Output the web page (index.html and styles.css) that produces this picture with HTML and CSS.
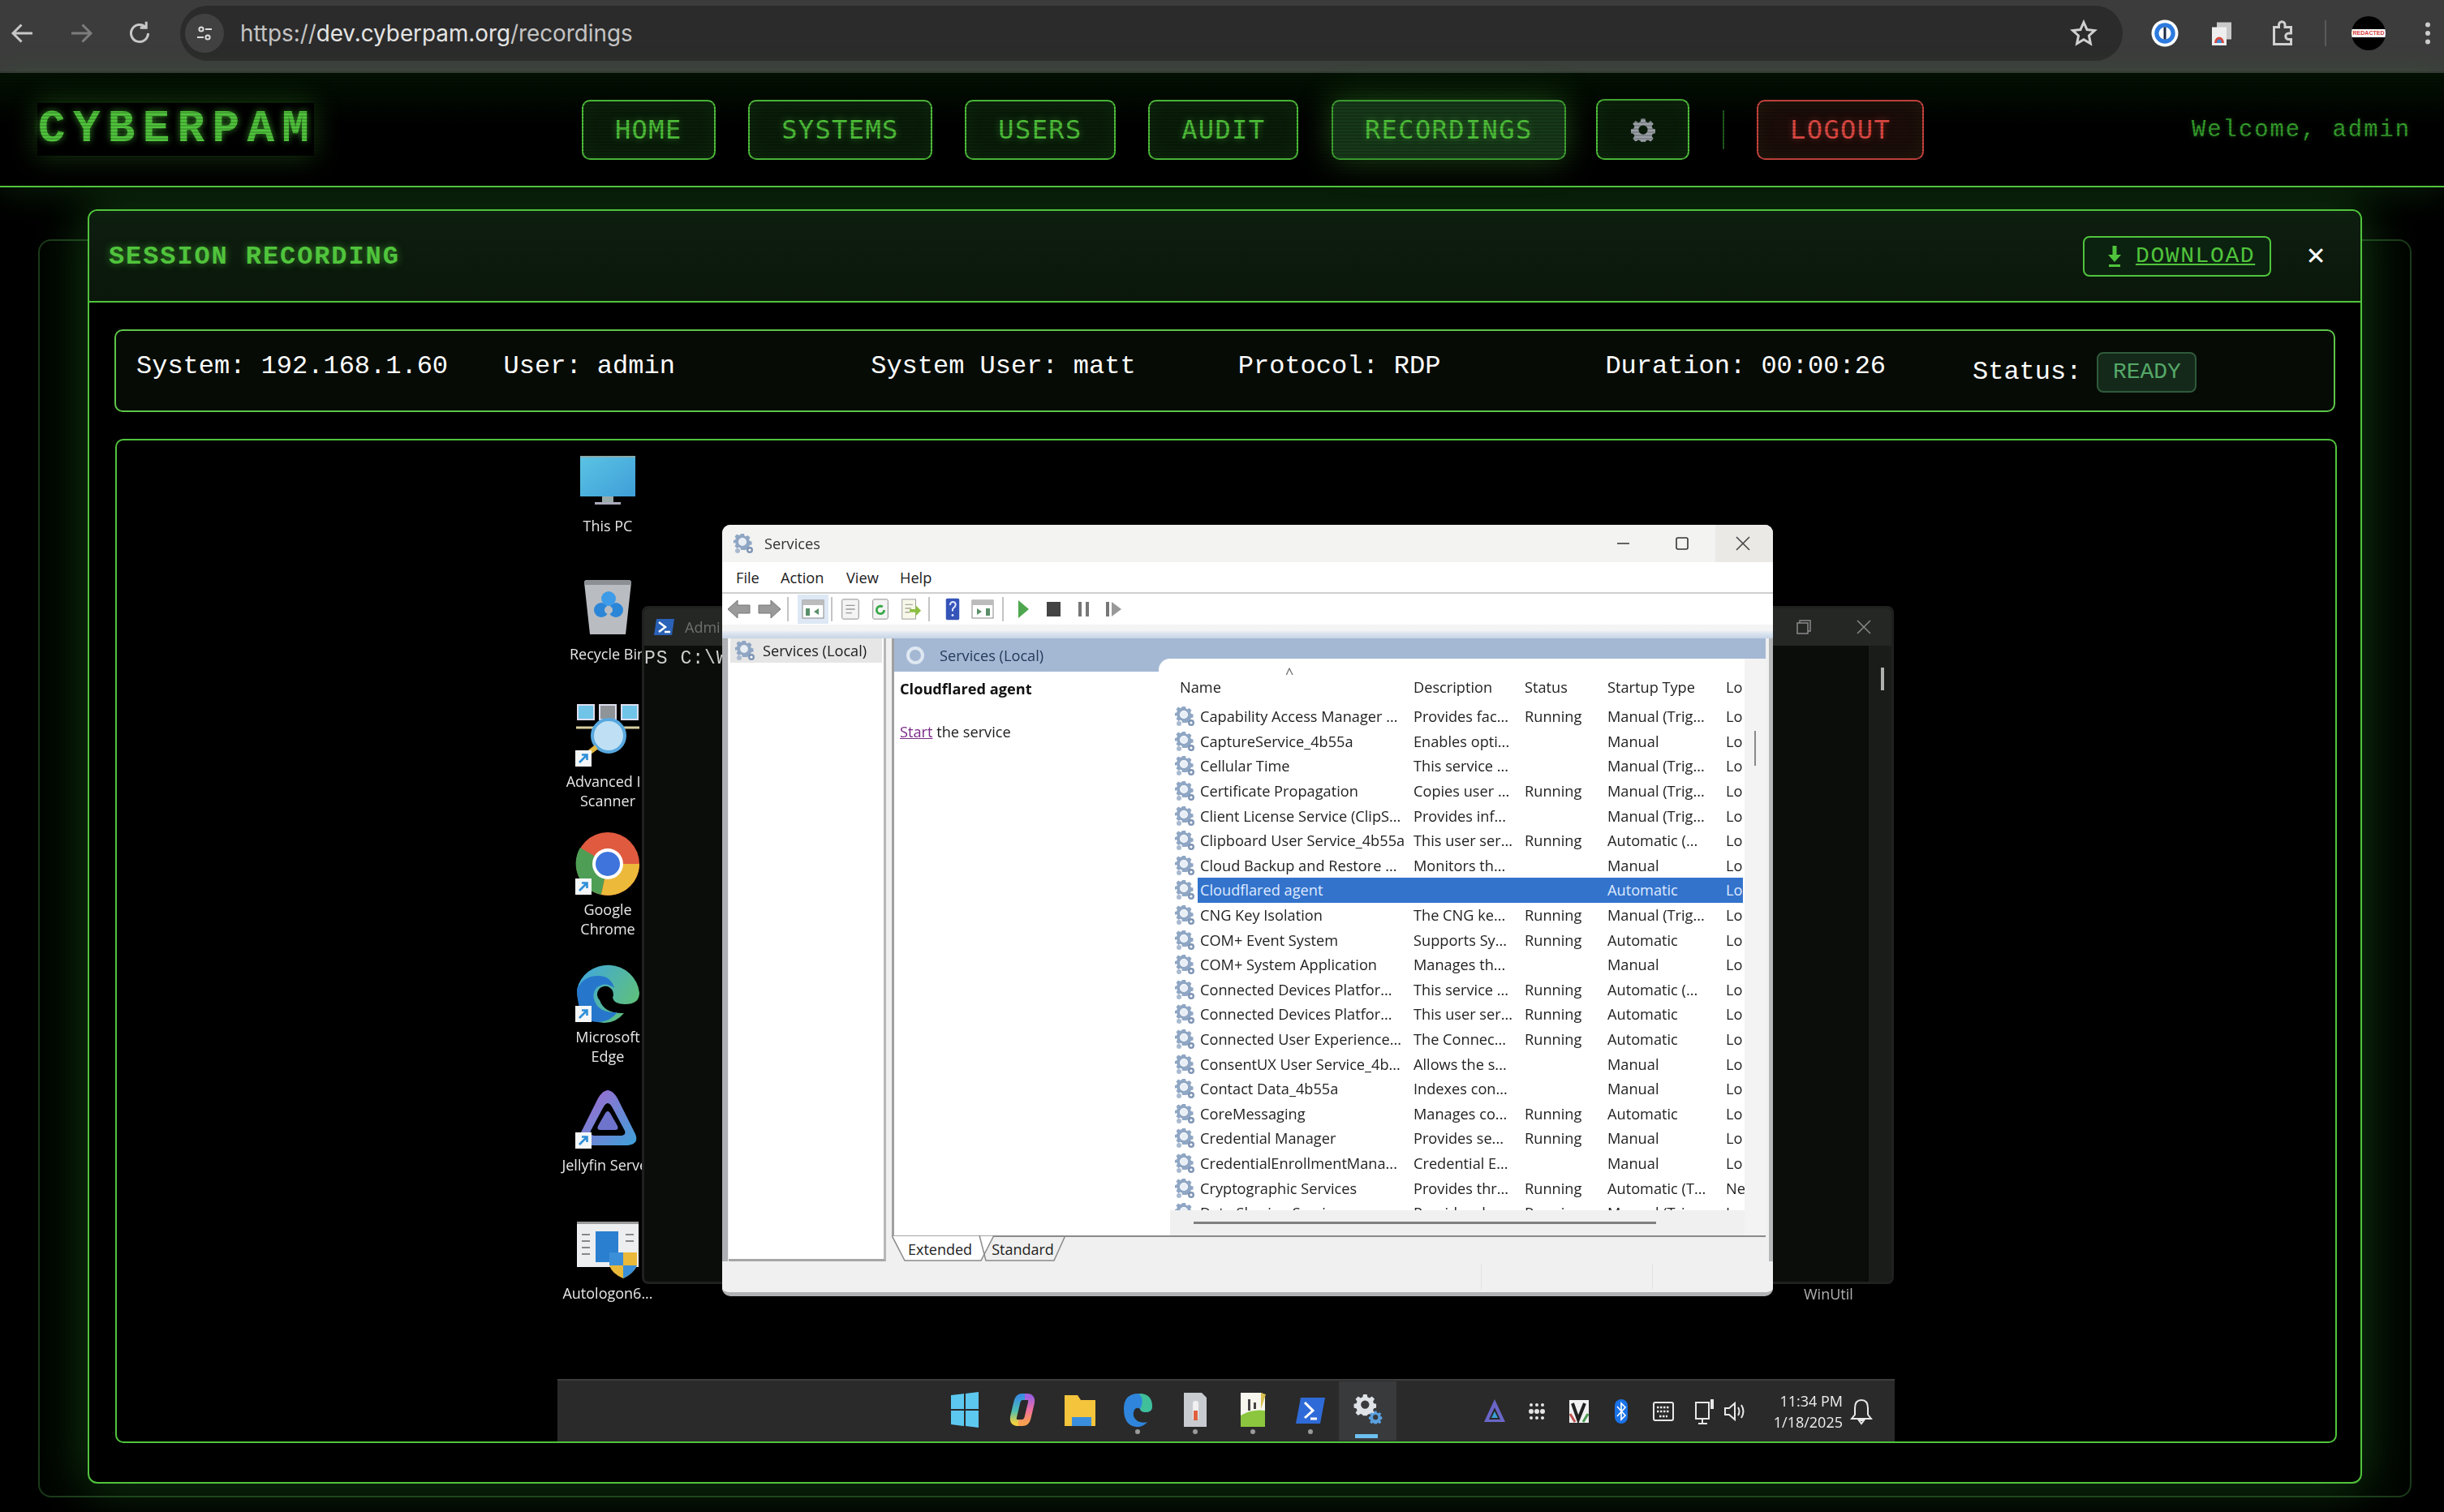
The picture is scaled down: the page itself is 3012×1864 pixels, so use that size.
FILE: index.html
```html
<!DOCTYPE html>
<html lang="en">
<head>
  <meta charset="UTF-8" />
  <title>CyberPAM - Recordings</title>
  <link rel="stylesheet" href="styles.css">
</head>
<body>
  <svg class="defs" width="0" height="0">
    <defs>
      <symbol id="gear" viewBox="0 0 24 24">
        <path fill-rule="evenodd" d="M10 1h4l.6 3 2.2.9 2.6-1.700 2.800 2.800-1.700 2.600.9 2.200 3 .6v4l-3 .6-.9 2.200 1.700 2.600-2.800 2.800-2.600-1.700-2.200.9-.6 3h-4l-.6-3-2.200-.9-2.600 1.700-2.800-2.800 1.700-2.600-.9-2.200-3-.6v-4l3-.6.9-2.200L1.800 6l2.800-2.800 2.600 1.700 2.200-.9zM12 7.500a4.500 4.500 0 1 0 0 9 4.500 4.500 0 0 0 0-9z"/>
      </symbol>
      <symbol id="svc" viewBox="0 0 26 26">
        <path fill="#8fa6c4" fill-rule="evenodd" d="M9 1h4l.5 2.500 2 .8 2.200-1.400 2.800 2.800-1.400 2.200.8 2 2.600.5v4l-2.600.5-.8 2 1.400 2.200-2.800 2.800-2.200-1.400-2 .8L13 21H9l-.5-2.500-2-.8-2.200 1.400-2.800-2.800 1.400-2.200-.8-2L-.5 13V9l2.600-.5.8-2-1.400-2.200 2.800-2.800 2.200 1.400 2-.8zM11 6a5 5 0 1 0 0 10 5 5 0 0 0 0-10z"/>
        <circle cx="11" cy="11" r="4" fill="#e8eef6"/>
        <circle cx="20" cy="21" r="4" fill="#7f95b5"/>
        <circle cx="20" cy="21" r="1.600" fill="#fff"/>
        <circle cx="5" cy="22" r="3" fill="#a9bad0"/>
      </symbol>
      <symbol id="shortcut" viewBox="0 0 20 20">
        <rect width="20" height="20" fill="#f4f6f8"/>
        <path d="M5 15 14 6M8 5.500h6.500V12" fill="none" stroke="#2f8fd8" stroke-width="2.600"/>
      </symbol>
    </defs>
  </svg>

  <div class="browser-bar">
    <div class="browser-nav">
      <svg class="chrome-ico" viewBox="0 0 24 24"><path d="M20 12H5M11 5l-7 7 7 7" fill="none" stroke="#c7c7c7" stroke-width="2"/></svg>
      <svg class="chrome-ico" viewBox="0 0 24 24"><path d="M4 12h15M13 5l7 7-7 7" fill="none" stroke="#7c7c7c" stroke-width="2"/></svg>
      <svg class="chrome-ico" viewBox="0 0 24 24"><path d="M19 12a7 7 0 1 1-2.100-5M17.500 2.500v5h-5" fill="none" stroke="#c7c7c7" stroke-width="2"/></svg>
    </div>
    <div class="omnibox">
      <span class="site-info">
        <svg viewBox="0 0 24 24" width="24" height="24"><circle cx="8" cy="7" r="2.600" fill="none" stroke="#ddd" stroke-width="2"/><path d="M13 7h8M3 17h8" stroke="#ddd" stroke-width="2"/><circle cx="16" cy="17" r="2.600" fill="none" stroke="#ddd" stroke-width="2"/></svg>
      </span>
      <span class="url"><span class="url-dim">https://</span>dev.cyberpam.org<span class="url-dim">/recordings</span></span>
      <svg class="star" viewBox="0 0 24 24"><path d="M12 3l2.700 6 6.300.7-4.700 4.300 1.300 6.500-5.600-3.300-5.600 3.300 1.300-6.500L3 9.700 9.300 9z" fill="none" stroke="#d0d0d0" stroke-width="2"/></svg>
    </div>
    <div class="browser-tools">
      <svg class="chrome-ico" viewBox="0 0 24 24"><circle cx="12" cy="12" r="11" fill="#fff"/><circle cx="12" cy="12" r="8.500" fill="#2d7be0"/><circle cx="12" cy="12" r="5" fill="#fff"/><rect x="11" y="7" width="2" height="10" fill="#1a2a44"/></svg>
      <svg class="chrome-ico" viewBox="0 0 24 24"><rect x="8" y="3" width="12" height="14" fill="#c9c9c9"/><rect x="4" y="7" width="12" height="15" fill="#eee"/><path d="M6 20a4 5 0 0 1 8 0z" fill="#d8483c"/><path d="M8 20a2 3 0 0 1 4 0z" fill="#3a8fdc"/></svg>
      <svg class="chrome-ico puzzle" viewBox="0 0 24 24"><path d="M5 7h4V5a2.500 2.500 0 0 1 5 0v2h5v5h-2a2.500 2.500 0 0 0 0 5h2v4H5z" fill="none" stroke="#d0d0d0" stroke-width="2"/></svg>
      <span class="tools-sep"></span>
      <span class="avatar"><span class="avatar-strip">REDACTED</span></span>
      <svg class="chrome-ico" viewBox="0 0 24 24"><circle cx="12" cy="5" r="2" fill="#ccc"/><circle cx="12" cy="12" r="2" fill="#ccc"/><circle cx="12" cy="19" r="2" fill="#ccc"/></svg>
    </div>
  </div>

  <header class="app-header">
    <div class="logo">CYBERPAM</div>
    <nav class="main-nav">
      <a class="nav-btn">HOME</a>
      <a class="nav-btn">SYSTEMS</a>
      <a class="nav-btn">USERS</a>
      <a class="nav-btn">AUDIT</a>
      <a class="nav-btn active">RECORDINGS</a>
      <a class="nav-btn gear-btn">
        <svg class="gear-ico" viewBox="0 0 24 24"><use href="#gear"/></svg>
      </a>
      <span class="nav-sep"></span>
      <a class="nav-btn logout">LOGOUT</a>
    </nav>
    <div class="welcome">Welcome, admin</div>
  </header>

  <main class="page">
    <div class="back-card"></div>

    <section class="modal">
      <div class="modal-head">
        <h2 class="modal-title">SESSION RECORDING</h2>
        <a class="download-btn">
          <svg viewBox="0 0 20 28" width="20" height="28"><path d="M7.500 1h5v11h5.500L10 21 2 12h5.500zM3 24h14v3H3z" fill="#50c43c"/></svg>
          <span>DOWNLOAD</span>
        </a>
        <span class="modal-close">✕</span>
      </div>

      <div class="modal-body">
        <div class="info-row">
          <span>System: 192.168.1.60</span>
          <span>User: admin</span>
          <span>System User: matt</span>
          <span>Protocol: RDP</span>
          <span>Duration: 00:00:26</span>
          <span class="status-cell">Status: <b class="ready">READY</b></span>
        </div>

        <div class="player">
          <div class="desktop">
            <div class="desk-icons">
              <div class="tile">
                <svg class="tile-ico" viewBox="0 0 80 80"><defs><linearGradient id="scr" x1="0" y1="0" x2="1" y2="1"><stop offset="0" stop-color="#5cc4e4"/><stop offset="1" stop-color="#3e9ed8"/></linearGradient></defs><rect x="6" y="10" width="68" height="50" fill="url(#scr)"/><rect x="6" y="10" width="68" height="2" fill="#8aa"/><rect x="33" y="60" width="14" height="7" fill="#9aa"/><rect x="24" y="67" width="32" height="3" fill="#aab"/></svg>
                <div class="tile-label">This PC</div>
              </div>
              <div class="tile">
                <svg class="tile-ico" viewBox="0 0 80 80"><path d="M11 8q0-3 4-3h50q4 0 4 3l-7 64H18z" fill="#b9bdc2"/><path d="M11 8q0-3 4-3h50q4 0 4 3v3H11z" fill="#8c9095"/><circle cx="32" cy="42" r="9" fill="#2c86d8"/><circle cx="50" cy="42" r="9" fill="#2c86d8"/><circle cx="41" cy="28" r="9" fill="#3d9be8"/><circle cx="41" cy="42" r="5" fill="#b9bdc2"/></svg>
                <div class="tile-label">Recycle Bin</div>
              </div>
              <div class="tile">
                <svg class="tile-ico" viewBox="0 0 80 80"><g fill="#6fc4e8" stroke="#dde" stroke-width="2"><rect x="3" y="2" width="20" height="18"/><rect x="57" y="2" width="20" height="18"/></g><rect x="30" y="2" width="20" height="18" fill="#8e9498" stroke="#dde" stroke-width="2"/><path d="M1 30h78" stroke="#d8cfa0" stroke-width="3"/><circle cx="41" cy="40" r="20" fill="#bfe0f4"/><circle cx="41" cy="40" r="20" fill="none" stroke="#58a8e0" stroke-width="4"/><path d="M26 54l-8 6" stroke="#e0b640" stroke-width="6"/><use href="#shortcut" x="0" y="58" width="20" height="20"/></svg>
                <div class="tile-label">Advanced IP<br>Scanner</div>
              </div>
              <div class="tile">
                <svg class="tile-ico" viewBox="0 0 80 80">
                  <circle cx="40" cy="40" r="39" fill="#e05a3f"/>
                  <path d="M40 40L6 20A39 39 0 0 0 32 78z" fill="#4f9e55"/>
                  <path d="M40 40h39A39 39 0 0 1 32 78z" fill="#ecb93a"/>
                  <circle cx="40" cy="40" r="19" fill="#fff"/>
                  <circle cx="40" cy="40" r="15" fill="#3f74dc"/>
                  <use href="#shortcut" x="0" y="58" width="20" height="20"/>
                </svg>
                <div class="tile-label">Google<br>Chrome</div>
              </div>
              <div class="tile">
                <svg class="tile-ico" viewBox="0 0 80 80">
                  <defs><linearGradient id="edge" x1="0" y1="0" x2="1" y2="0.6"><stop offset="0" stop-color="#3fa6e4"/><stop offset="1" stop-color="#5fc07a"/></linearGradient></defs>
                  <path d="M2 38a39 38 0 0 1 77 4q0 14-18 14-13 0-15-8a10 10 0 1 0-16 3q6 17 30 16-10 12-24 12Q3 78 2 38z" fill="url(#edge)"/>
                  <path d="M2 38q8-18 28-17 14 1 18 15-12-9-22 0-8 10 2 23 8 8 24 7-10 12-24 12Q3 78 2 38z" fill="#2677cc"/>
                  <use href="#shortcut" x="0" y="58" width="20" height="20"/>
                </svg>
                <div class="tile-label">Microsoft<br>Edge</div>
              </div>
              <div class="tile">
                <svg class="tile-ico" viewBox="0 0 80 80">
                  <defs><linearGradient id="jelly" x1="0" y1="0" x2="1" y2="1"><stop offset="0" stop-color="#a866d0"/><stop offset="1" stop-color="#3da0d8"/></linearGradient></defs>
                  <path fill="url(#jelly)" fill-rule="evenodd" d="M40 4q6 0 12 10l22 44q5 12-9 14H15Q1 70 6 58l22-44Q34 4 40 4zm0 16q-3 0-6 6L19 54q-2 5 4 6h34q6-1 4-6L46 26q-3-6-6-6z"/>
                  <path d="M40 30q2 0 4 4l8 14q2 5-3 5H31q-5 0-3-5l8-14q2-4 4-4z" fill="#6e74cc"/>
                  <use href="#shortcut" x="0" y="56" width="20" height="20"/>
                </svg>
                <div class="tile-label">Jellyfin Server</div>
              </div>
              <div class="tile">
                <svg class="tile-ico" viewBox="0 0 80 80">
                  <rect x="2" y="8" width="76" height="56" fill="#eceef0"/>
                  <rect x="2" y="8" width="76" height="3" fill="#9a9a9a"/>
                  <path d="M8 24h10M8 32h10M8 40h10M8 48h10M62 24h10M62 32h10" stroke="#888" stroke-width="2"/>
                  <rect x="25" y="20" width="28" height="38" fill="#2a7fd0"/>
                  <path d="M42 46h34v16q-4 10-17 16-14-6-17-16z" fill="#eab93a"/>
                  <path d="M42 46h17v16H42zM59 62h17q-4 10-17 16z" fill="#3a8fd8"/>
                </svg>
                <div class="tile-label">Autologon6...</div>
              </div>
            </div>

            <div class="terminal">
              <div class="term-bar">
                <svg viewBox="0 0 26 22" width="26" height="22"><path d="M3 1h22l-3 20H0z" fill="#2a62b8"/><path d="M6 5l8 6-8 6" fill="none" stroke="#fff" stroke-width="2.500"/><path d="M13 17h7" stroke="#fff" stroke-width="2.500"/></svg>
                <span class="term-title">Admi</span>
                <span class="term-ctrls">
                  <svg viewBox="0 0 20 20" width="20" height="20"><path d="M2 5h13v13H2zM5 5V2h13v13h-3" fill="none" stroke="#8a8a8a" stroke-width="1.500"/></svg>
                  <svg viewBox="0 0 20 20" width="20" height="20"><path d="M2 2l16 16M18 2L2 18" fill="none" stroke="#8a8a8a" stroke-width="1.500"/></svg>
                </span>
              </div>
              <div class="term-main">
                <div class="term-text">PS C:\WI</div>
                <div class="term-scroll"><span class="term-thumb"></span></div>
              </div>
            </div>

            <div class="desk-label">WinUtil</div>

            <div class="services">
              <div class="svc-title">
                <svg class="svc-ico" viewBox="0 0 26 26"><use href="#svc"/></svg>
                <span>Services</span>
                <span class="win-ctrls">
                  <span class="win-ctrl"><svg viewBox="0 0 20 20" width="20" height="20"><path d="M2 10h15" stroke="#333" stroke-width="1.600"/></svg></span>
                  <span class="win-ctrl"><svg viewBox="0 0 20 20" width="20" height="20"><rect x="3" y="3" width="14" height="14" rx="2" fill="none" stroke="#333" stroke-width="1.600"/></svg></span>
                  <span class="win-ctrl close"><svg viewBox="0 0 20 20" width="20" height="20"><path d="M2 2l16 16M18 2L2 18" stroke="#444" stroke-width="1.600"/></svg></span>
                </span>
              </div>
              <div class="svc-menu">
                <span>File</span><span>Action</span><span>View</span><span>Help</span>
              </div>
              <div class="svc-tools">
                <svg class="tb" viewBox="0 0 30 26"><path d="M1 13L13 2v6h15v10H13v6z" fill="#9a9a9a" stroke="#777"/></svg>
                <svg class="tb" viewBox="0 0 30 26"><path d="M29 13L17 2v6H2v10h15v6z" fill="#9a9a9a" stroke="#777"/></svg>
                <span class="tb-sep"></span>
                <span class="tb-on"><svg class="tb" viewBox="0 0 30 26"><rect x="2" y="2" width="26" height="22" fill="#fff" stroke="#888"/><rect x="2" y="2" width="26" height="6" fill="#bcbcbc"/><path d="M6 12h5v9H6zM22 12l-6 4 6 4z" fill="#5a8f6a"/></svg></span>
                <span class="tb-sep"></span>
                <svg class="tb" viewBox="0 0 30 30"><rect x="4" y="2" width="22" height="26" rx="2" fill="#f4f4f4" stroke="#888"/><path d="M9 10h12M9 15h12M9 20h8" stroke="#999" stroke-width="1.500"/></svg>
                <svg class="tb" viewBox="0 0 30 30"><rect x="5" y="2" width="20" height="26" rx="2" fill="#f4f4f4" stroke="#888"/><path d="M20 16a5 5 0 1 1-2-4" fill="none" stroke="#3aa84a" stroke-width="3"/></svg>
                <svg class="tb" viewBox="0 0 30 30"><rect x="4" y="2" width="18" height="26" fill="#f7f7ea" stroke="#999"/><path d="M8 9h10M8 14h8M8 19h6" stroke="#aa9" stroke-width="1.500"/><path d="M14 15h8v-5l7 7-7 7v-5h-8z" fill="#8cc040"/></svg>
                <span class="tb-sep wide"></span>
                <svg class="tb" viewBox="0 0 30 34"><rect x="5" y="1" width="20" height="32" rx="2" fill="#3554b8"/><path d="M11 11q1-5 4.500-5t4 4q0 3-3 5l-1.500 2v3" fill="none" stroke="#dfe6ff" stroke-width="2.500"/><circle cx="15" cy="26" r="1.800" fill="#dfe6ff"/></svg>
                <svg class="tb" viewBox="0 0 30 26"><rect x="2" y="2" width="26" height="22" fill="#fff" stroke="#888"/><rect x="2" y="2" width="26" height="6" fill="#bcbcbc"/><path d="M19 12h5v9h-5zM8 12l6 4-6 4z" fill="#5a8f6a"/></svg>
                <span class="tb-sep mid"></span>
                <svg class="tb" viewBox="0 0 30 26"><path d="M9 2l13 11L9 24z" fill="#4ea64e"/></svg>
                <svg class="tb" viewBox="0 0 30 26"><rect x="7" y="4" width="17" height="18" fill="#444"/></svg>
                <svg class="tb" viewBox="0 0 30 26"><path d="M9 4h4v18H9zM18 4h4v18h-4z" fill="#777"/></svg>
                <svg class="tb" viewBox="0 0 30 26"><path d="M6 4h4v18H6z" fill="#777"/><path d="M13 4l12 9-12 9z" fill="#999"/></svg>
              </div>
              <div class="svc-band"></div>
              <div class="svc-body">
                <div class="tree-pane">
                  <div class="tree-node">
                    <svg class="svc-ico" viewBox="0 0 26 26"><use href="#svc"/></svg>
                    <span>Services (Local)</span>
                  </div>
                </div>
                <div class="detail-pane">
                  <div class="detail-main">
                    <div class="detail-side">
                      <div class="detail-head">
                        <svg class="head-ico" viewBox="0 0 24 24"><circle cx="12" cy="12" r="9" fill="none" stroke="#dfe8f2" stroke-width="4"/></svg>
                        <span>Services (Local)</span>
                      </div>
                      <div class="detail-name">Cloudflared agent</div>
                      <div class="detail-link"><u>Start</u> the service</div>
                    </div>
                    <div class="list-side">
                      <div class="list-wrap">
                        <div class="svc-row list-head">
                          <i></i><span>Name<em class="sort-caret">^</em></span><span>Description</span><span>Status</span><span>Startup Type</span><span>Lo</span>
                        </div>
                        <div class="rows">
                          <div class="svc-row"><svg viewBox="0 0 26 26"><use href="#svc"/></svg><span>Capability Access Manager ...</span><span>Provides fac...</span><span>Running</span><span>Manual (Trig...</span><span>Lo</span></div>
                          <div class="svc-row"><svg viewBox="0 0 26 26"><use href="#svc"/></svg><span>CaptureService_4b55a</span><span>Enables opti...</span><span></span><span>Manual</span><span>Lo</span></div>
                          <div class="svc-row"><svg viewBox="0 0 26 26"><use href="#svc"/></svg><span>Cellular Time</span><span>This service ...</span><span></span><span>Manual (Trig...</span><span>Lo</span></div>
                          <div class="svc-row"><svg viewBox="0 0 26 26"><use href="#svc"/></svg><span>Certificate Propagation</span><span>Copies user ...</span><span>Running</span><span>Manual (Trig...</span><span>Lo</span></div>
                          <div class="svc-row"><svg viewBox="0 0 26 26"><use href="#svc"/></svg><span>Client License Service (ClipS...</span><span>Provides inf...</span><span></span><span>Manual (Trig...</span><span>Lo</span></div>
                          <div class="svc-row"><svg viewBox="0 0 26 26"><use href="#svc"/></svg><span>Clipboard User Service_4b55a</span><span>This user ser...</span><span>Running</span><span>Automatic (...</span><span>Lo</span></div>
                          <div class="svc-row"><svg viewBox="0 0 26 26"><use href="#svc"/></svg><span>Cloud Backup and Restore ...</span><span>Monitors th...</span><span></span><span>Manual</span><span>Lo</span></div>
                          <div class="svc-row selected"><svg viewBox="0 0 26 26"><use href="#svc"/></svg><span>Cloudflared agent</span><span></span><span></span><span>Automatic</span><span>Lo</span></div>
                          <div class="svc-row"><svg viewBox="0 0 26 26"><use href="#svc"/></svg><span>CNG Key Isolation</span><span>The CNG ke...</span><span>Running</span><span>Manual (Trig...</span><span>Lo</span></div>
                          <div class="svc-row"><svg viewBox="0 0 26 26"><use href="#svc"/></svg><span>COM+ Event System</span><span>Supports Sy...</span><span>Running</span><span>Automatic</span><span>Lo</span></div>
                          <div class="svc-row"><svg viewBox="0 0 26 26"><use href="#svc"/></svg><span>COM+ System Application</span><span>Manages th...</span><span></span><span>Manual</span><span>Lo</span></div>
                          <div class="svc-row"><svg viewBox="0 0 26 26"><use href="#svc"/></svg><span>Connected Devices Platfor...</span><span>This service ...</span><span>Running</span><span>Automatic (...</span><span>Lo</span></div>
                          <div class="svc-row"><svg viewBox="0 0 26 26"><use href="#svc"/></svg><span>Connected Devices Platfor...</span><span>This user ser...</span><span>Running</span><span>Automatic</span><span>Lo</span></div>
                          <div class="svc-row"><svg viewBox="0 0 26 26"><use href="#svc"/></svg><span>Connected User Experience...</span><span>The Connec...</span><span>Running</span><span>Automatic</span><span>Lo</span></div>
                          <div class="svc-row"><svg viewBox="0 0 26 26"><use href="#svc"/></svg><span>ConsentUX User Service_4b...</span><span>Allows the s...</span><span></span><span>Manual</span><span>Lo</span></div>
                          <div class="svc-row"><svg viewBox="0 0 26 26"><use href="#svc"/></svg><span>Contact Data_4b55a</span><span>Indexes con...</span><span></span><span>Manual</span><span>Lo</span></div>
                          <div class="svc-row"><svg viewBox="0 0 26 26"><use href="#svc"/></svg><span>CoreMessaging</span><span>Manages co...</span><span>Running</span><span>Automatic</span><span>Lo</span></div>
                          <div class="svc-row"><svg viewBox="0 0 26 26"><use href="#svc"/></svg><span>Credential Manager</span><span>Provides se...</span><span>Running</span><span>Manual</span><span>Lo</span></div>
                          <div class="svc-row"><svg viewBox="0 0 26 26"><use href="#svc"/></svg><span>CredentialEnrollmentMana...</span><span>Credential E...</span><span></span><span>Manual</span><span>Lo</span></div>
                          <div class="svc-row"><svg viewBox="0 0 26 26"><use href="#svc"/></svg><span>Cryptographic Services</span><span>Provides thr...</span><span>Running</span><span>Automatic (T...</span><span>Ne</span></div>
                          <div class="svc-row"><svg viewBox="0 0 26 26"><use href="#svc"/></svg><span>Data Sharing Service</span><span>Provides da...</span><span>Running</span><span>Manual (Trig...</span><span>Lo</span></div>
                        </div>
                        <div class="hscroll"><span class="hthumb"></span></div>
                      </div>
                      <div class="vscroll"><span class="vthumb"></span></div>
                    </div>
                  </div>
                  <div class="svc-tabs">
                    <svg class="tab-shape" viewBox="0 0 215 32" width="215" height="32">
                      <path d="M0 0l16 31h94l16-31z" fill="#fff" stroke="#8a8a8a" stroke-width="1.500"/>
                      <path d="M110 0l-2 0 8 31h84l14-31" fill="none" stroke="#8a8a8a" stroke-width="1.500"/>
                    </svg>
                    <span class="tab">Extended</span>
                    <span class="tab">Standard</span>
                  </div>
                </div>
              </div>
              <div class="svc-status">
                <span class="status-part"></span>
                <span class="status-part"></span>
              </div>
            </div>

            <div class="taskbar">
              <div class="task-apps">
                <span class="task-app">
                  <svg viewBox="0 0 40 46"><path d="M3 5l16-2v19H3zM21 3l16-2v21H21zM3 24h16v19L3 41zM21 24h16v21l-16-2z" fill="#5cc8f0"/></svg>
                </span>
                <span class="task-app">
                  <svg viewBox="0 0 40 46">
                    <defs>
                      <linearGradient id="cop1" x1="0" y1="0" x2="0" y2="1"><stop offset="0" stop-color="#3a8fe0"/><stop offset=".55" stop-color="#4fc0b0"/><stop offset="1" stop-color="#f0d040"/></linearGradient>
                      <linearGradient id="cop2" x1="0" y1="0" x2="0" y2="1"><stop offset="0" stop-color="#a060e0"/><stop offset=".5" stop-color="#f070a0"/><stop offset="1" stop-color="#f8a050"/></linearGradient>
                    </defs>
                    <path d="M25 7h-5q-5 0-6.500 6L9 32q-1 7 5 7h3" fill="none" stroke="url(#cop1)" stroke-width="8"/>
                    <path d="M15 39h5q5 0 6.500-6L31 14q1-7-5-7h-3" fill="none" stroke="url(#cop2)" stroke-width="8"/>
                  </svg>
                </span>
                <span class="task-app">
                  <svg viewBox="0 0 40 46"><path d="M1 5h16l4 6h18v32H1z" fill="#f4c43c"/><rect x="10" y="32" width="24" height="11" fill="#3a8fdc"/></svg>
                </span>
                <span class="task-app running">
                  <svg viewBox="0 0 40 46"><path d="M3 22Q3 3 21 3q16 0 17 16 0 7-8 7-6 0-7-4-4-3-7 1-4 8 4 14 6 3 12 1-6 7-14 6Q3 42 3 22z" fill="#2f85dc"/><path d="M22 3q16 0 16 16 0 7-8 7-6 0-7-4 6-10-1-19z" fill="#3fbf9a"/></svg>
                </span>
                <span class="task-app running">
                  <svg viewBox="0 0 40 46"><path d="M6 2h22l6 6v36H6z" fill="#c8ccd0"/><rect x="17" y="12" width="7" height="24" rx="3" fill="#f0f0f0"/><rect x="18" y="24" width="5" height="12" fill="#e06040"/></svg>
                </span>
                <span class="task-app running">
                  <svg viewBox="0 0 40 46"><path d="M5 2h26l4 6v36H5z" fill="#f6f6ee"/><path d="M5 30q14-8 30-6v20H5z" fill="#8cc63f"/><path d="M14 10h3v14h-3zM21 14h3v8h-3z" fill="#444"/><path d="M30 2l6 2-6 18z" fill="#d8c050"/></svg>
                </span>
                <span class="task-app running">
                  <svg viewBox="0 0 40 46"><path d="M8 8h30l-6 32H2z" fill="#2f6bd8"/><path d="M13 14l10 10-10 9" fill="none" stroke="#fff" stroke-width="3"/><path d="M20 34h8" stroke="#fff" stroke-width="3"/></svg>
                </span>
                <span class="task-app current">
                  <svg viewBox="0 0 40 50"><g fill="#dfe3e8"><use href="#gear" x="1" y="3" width="30" height="30"/></g><g fill="#5aa0e0"><use href="#gear" x="21" y="26" width="18" height="18"/></g></svg>
                </span>
              </div>
              <div class="task-tray">
                <svg viewBox="0 0 28 34" width="28" height="34"><path fill="#6a66c8" fill-rule="evenodd" d="M14 2l13 28H1zM14 12L7 27h14z"/><path d="M14 17l4 8h-8z" fill="#3a9ed8"/></svg>
                <svg viewBox="0 0 28 34" width="28" height="34"><g fill="#e4e4e4"><circle cx="7" cy="9" r="2"/><circle cx="14" cy="9" r="2"/><circle cx="21" cy="9" r="2"/><circle cx="7" cy="17" r="3"/><circle cx="14" cy="17" r="3"/><circle cx="21" cy="17" r="3"/><circle cx="7" cy="25" r="2"/><circle cx="14" cy="25" r="2"/><circle cx="21" cy="25" r="2"/></g></svg>
                <svg viewBox="0 0 28 34" width="28" height="34"><rect x="2" y="3" width="24" height="28" fill="#f2f2f2"/><path d="M6 7l7 20 8-20" fill="none" stroke="#222" stroke-width="4"/><path d="M3 20l6 10" stroke="#c05050" stroke-width="3"/><path d="M25 20l-6 10" stroke="#4a9a50" stroke-width="3"/></svg>
                <svg viewBox="0 0 28 34" width="28" height="34"><rect x="6" y="2" width="16" height="30" rx="8" fill="#1a72e8"/><path d="M9 11l10 11-5 5V7l5 5-10 11" fill="none" stroke="#fff" stroke-width="1.600"/></svg>
                <svg viewBox="0 0 28 34" width="28" height="34"><rect x="2" y="6" width="24" height="22" rx="2" fill="none" stroke="#e8e8e8" stroke-width="2"/><path d="M6 12h16M6 17h16M9 23h10" stroke="#e8e8e8" stroke-width="2.500" stroke-dasharray="2.500 1.500"/></svg>
                <svg viewBox="0 0 28 34" width="28" height="34"><path d="M2 6h16v20H2zM10 26v5M5 32h11" fill="none" stroke="#e8e8e8" stroke-width="2"/><path d="M22 2v12" stroke="#e8e8e8" stroke-width="4"/></svg>
                <svg class="tray-sound" viewBox="0 0 28 34" width="28" height="34"><path d="M2 13h5l7-6v20l-7-6H2z" fill="none" stroke="#e8e8e8" stroke-width="2"/><path d="M18 12q3 5 0 10M22 9q5 8 0 16" fill="none" stroke="#e8e8e8" stroke-width="2"/></svg>
                <div class="tray-clock"><div>11:34 PM</div><div>1/18/2025</div></div>
                <svg viewBox="0 0 28 34" width="28" height="34"><path d="M14 3q8 0 8 10v8l4 5H2l4-5v-8Q6 3 14 3zM11 28h6l-3 4z" fill="none" stroke="#e8e8e8" stroke-width="2"/></svg>
              </div>
            </div>
          </div>
        </div>
      </div>
    </section>
  </main>
</body>
</html>
```

FILE: styles.css
```css
* {
  box-sizing: border-box;
}

html, body {
  margin: 0;
  height: 100%;
}

body {
  width: 3012px;
  height: 1864px;
  overflow: hidden;
  display: flex;
  flex-direction: column;
  background: #000;
  font-family: 'Liberation Mono', monospace;
  color: #50c43c;
}

.defs {
  position: absolute;
}

/* browser chrome */
.browser-bar {
  height: 90px;
  flex: none;
  display: flex;
  align-items: center;
  background: #3c3c3c;
  border-bottom: 2px solid #333;
  padding-bottom: 6px;
}

.browser-nav {
  display: flex;
  gap: 36px;
  width: 222px;
  padding-left: 10px;
}

.chrome-ico {
  width: 36px;
  height: 36px;
  flex: none;
}

.omnibox {
  width: 2394px;
  height: 68px;
  display: flex;
  align-items: center;
  background: #2b2b2b;
  border-radius: 34px;
  padding-left: 6px;
}

.site-info {
  width: 48px;
  height: 48px;
  border-radius: 50%;
  background: #414141;
  display: flex;
  align-items: center;
  justify-content: center;
}

.url {
  font-family: Inter, sans-serif;
  font-size: 27.8px;
  margin-left: 20px;
  color: #e4e4e4;
  flex: 1;
}

.url-dim {
  color: #c4c4c4;
}

.star {
  width: 36px;
  height: 36px;
  margin-right: 30px;
}

.browser-tools {
  display: flex;
  align-items: center;
  gap: 34px;
  padding-left: 34px;
}

.puzzle {
  margin-left: 5px;
}

.tools-sep {
  width: 2px;
  height: 32px;
  background: #5a5a5a;
}

.avatar {
  width: 42px;
  height: 42px;
  margin-left: -3px;
  border-radius: 50%;
  background: #000;
  display: flex;
  align-items: center;
  overflow: hidden;
}

.avatar-strip {
  width: 100%;
  height: 10px;
  text-align: center;
  font: bold 7px/10px 'Liberation Sans', sans-serif;
  color: #d8403c;
  background: #fff;
}

/* app header */
.app-header {
  position: relative;
  height: 141px;
  flex: none;
  display: flex;
  align-items: center;
  justify-content: space-between;
  padding: 0 41px 0 46px;
  background: linear-gradient(#031203, #000 45%);
  border-bottom: 2px solid #50c43c;
  box-shadow: 0 6px 40px rgba(60, 190, 60, .16);
  z-index: 2;
}

.app-header::after {
  content: "";
  position: absolute;
  inset: 0;
  pointer-events: none;
  background: repeating-linear-gradient(rgba(0, 0, 0, .18) 0 2px, transparent 2px 4px);
}

.logo {
  width: 341px;
  height: 65px;
  line-height: 65px;
  margin-top: -1px;
  padding-left: 1px;
  background: #000;
  font-size: 56px;
  font-weight: bold;
  letter-spacing: 9.3px;
  white-space: nowrap;
  text-shadow: 0 0 8px rgba(80, 196, 60, .7);
  box-shadow: 0 0 34px rgba(80, 196, 60, .32);
}

.main-nav {
  display: flex;
  align-items: center;
  gap: 40.5px;
}

.nav-btn {
  height: 74px;
  display: flex;
  align-items: center;
  padding: 0 39px;
  font-family: 'DejaVu Sans Mono', monospace;
  font-size: 32px;
  letter-spacing: 1.4px;
  color: #4fc23a;
  border: 2px solid #50c43c;
  border-radius: 10px;
  background: #0a1d0a;
  text-shadow: 0 0 8px rgba(80, 196, 60, .5);
  box-shadow: inset 0 0 22px rgba(80, 196, 60, .08);
}

.nav-btn.active {
  background: #17391a;
  box-shadow: 0 0 40px rgba(80, 196, 60, .4);
  border-color: #3fa632;
}

.gear-btn {
  width: 115px;
  height: 75px;
  margin-left: -3px;
  padding: 0;
  justify-content: center;
}

.gear-ico {
  width: 30px;
  height: 30px;
  fill: #9aa0a6;
}

.nav-sep {
  width: 2px;
  height: 48px;
  background: #1f5a1c;
}

.logout {
  color: #e04a44;
  border-color: #cf4640;
  background: #1c0d0a;
  text-shadow: 0 0 8px rgba(220, 70, 60, .4);
}

.welcome {
  margin-top: 2px;
  font-size: 28.8px;
  letter-spacing: 2px;
  color: #35a02c;
  text-shadow: 0 0 6px rgba(60, 170, 50, .4);
  white-space: nowrap;
}

/* page */
.page {
  position: relative;
  flex: 1;
  background: #000;
}

.back-card {
  position: absolute;
  left: 47px;
  top: 64px;
  width: 2925px;
  height: 1551px;
  border: 2px solid #1b3a1a;
  border-radius: 16px;
  background: #010401;
}

.modal {
  position: absolute;
  left: 108px;
  top: 27px;
  width: 2803px;
  height: 1571px;
  display: flex;
  flex-direction: column;
  background: #000;
  border: 2px solid #50c43c;
  border-radius: 12px;
  box-shadow: 0 0 60px 6px rgba(60, 200, 60, .26);
}

.modal-head {
  height: 113px;
  flex: none;
  display: flex;
  align-items: center;
  padding: 0 36px 0 24px;
  background: linear-gradient(#0e1e10, #0a170a);
  border-bottom: 2px solid #50c43c;
  border-radius: 10px 10px 0 0;
}

.modal-title {
  flex: 1;
  margin: 1px 0 0;
  font-size: 32px;
  letter-spacing: 1.9px;
  text-shadow: 0 0 10px rgba(80, 196, 60, .6);
}

.download-btn {
  width: 232px;
  height: 50px;
  display: flex;
  align-items: center;
  gap: 16px;
  padding-left: 27px;
  font-size: 28px;
  letter-spacing: 1.6px;
  text-decoration: underline;
  border: 2px solid #50c43c;
  border-radius: 8px;
  background: #0c2210;
}

.modal-close {
  width: 110px;
  text-align: center;
  font-size: 30px;
  color: #fff;
  margin-right: -36px;
  font-family: 'DejaVu Sans', sans-serif;
}

.modal-body {
  flex: 1;
  display: flex;
  flex-direction: column;
  gap: 33px;
  padding: 33px 31px 48px;
}

.info-row {
  height: 102px;
  flex: none;
  display: grid;
  grid-template-columns: repeat(6, 452.6px);
  padding: 26px 25px 22px;
  font-size: 32px;
  line-height: 36px;
  white-space: nowrap;
  color: #fff;
  background: #060b06;
  border: 2px solid #5ec44a;
  border-radius: 10px;
}

.status-cell {
  display: flex;
  align-items: center;
  gap: 19px;
  height: 50px;
}

.ready {
  width: 123px;
  height: 50px;
  line-height: 46px;
  text-align: center;
  font-size: 28px;
  font-weight: normal;
  color: #55a868;
  background: #14291a;
  border: 2px solid #2f5a3a;
  border-radius: 8px;
}

.player {
  flex: 1;
  display: flex;
  justify-content: center;
  margin: 0 -2px 0 1px;
  border: 2px solid #50c43c;
  border-radius: 10px;
  overflow: hidden;
  background: #000;
}

/* remote desktop, windows sit on it freely */
.desktop {
  position: relative;
  width: 1648px;
  display: flex;
  flex-direction: column;
  font-family: 'Open Sans', sans-serif;
  filter: blur(.6px);
}

.desk-icons {
  flex: 1;
  padding-top: 9px;
}

.tile {
  height: 157.6px;
  width: 124px;
  text-align: center;
}

.tile-ico {
  display: block;
  width: 80px;
  height: 80px;
  margin: 0 auto 4px;
}

.tile-label {
  width: 144px;
  margin-left: -10px;
  font-size: 18px;
  line-height: 24px;
  color: #e8e8e8;
  white-space: nowrap;
}

.desk-label {
  position: absolute;
  left: 1536px;
  top: 1040px;
  font-size: 18px;
  line-height: 24px;
  color: #b0b0b0;
}

.terminal {
  position: absolute;
  left: 104px;
  top: 204px;
  width: 1543px;
  height: 836px;
  display: flex;
  flex-direction: column;
  background: #0b0d0b;
  border: 3px solid #1f211f;
  border-radius: 8px;
  overflow: hidden;
}

.term-bar {
  height: 46px;
  flex: none;
  display: flex;
  align-items: center;
  gap: 12px;
  padding-left: 12px;
  background: #252725;
  color: #6f6f6f;
  font-size: 18px;
}

.term-title {
  flex: 1;
  white-space: nowrap;
}

.term-ctrls {
  display: flex;
  gap: 54px;
  padding-right: 24px;
}

.term-main {
  flex: 1;
  display: flex;
}

.term-text {
  flex: 1;
  padding: 2px 0 0 0;
  font-family: 'Liberation Mono', monospace;
  font-size: 23px;
  line-height: 28px;
  letter-spacing: 1px;
  color: #cfcfcf;
  white-space: nowrap;
}

.term-scroll {
  width: 28px;
  padding: 27px 0 0 15px;
  background: #1a1c1a;
}

.term-thumb {
  display: block;
  width: 4px;
  height: 28px;
  background: #b0b0b0;
}

.services {
  position: absolute;
  left: 203px;
  top: 104px;
  width: 1295px;
  height: 951px;
  display: flex;
  flex-direction: column;
  background: #f0f0f0;
  border-radius: 10px;
  border-bottom: 5px solid #b0b2b4;
  overflow: hidden;
  color: #1c1c1c;
  font-size: 18.2px;
  line-height: 24px;
}

.svc-ico {
  width: 26px;
  height: 26px;
  flex: none;
}

.svc-title {
  height: 46px;
  flex: none;
  display: flex;
  align-items: center;
  gap: 12px;
  padding-left: 14px;
  background: #f3f3f1;
  color: #333;
}

.win-ctrls {
  margin-left: auto;
  display: flex;
  align-items: stretch;
  height: 100%;
}

.win-ctrl {
  width: 62px;
  margin-right: 10px;
  display: flex;
  align-items: center;
  justify-content: center;
}

.win-ctrl.close {
  width: 71px;
  margin-right: 0;
  padding-right: 4px;
  background: #ebe9e6;
}

.svc-menu {
  height: 39px;
  flex: none;
  display: flex;
  align-items: center;
  padding-left: 17px;
  background: #fff;
  border-bottom: 2px solid #cfcfcf;
}

.svc-menu span:nth-child(1) { width: 55px; }
.svc-menu span:nth-child(2) { width: 81px; }
.svc-menu span:nth-child(3) { width: 66px; }

.svc-tools {
  height: 38px;
  flex: none;
  display: flex;
  align-items: center;
  gap: 7px;
  padding-left: 6px;
  background: #fff;
}

.tb {
  width: 30px;
  height: 28px;
  flex: none;
}

.tb-sep {
  width: 2px;
  height: 30px;
  flex: none;
  background: #c4c4c4;
}

.tb-sep.wide {
  margin-right: 6px;
}

.tb-sep.mid {
  margin: 0 2px;
}

.tb-on {
  width: 38px;
  height: 36px;
  margin: 0 -4px 0 4px;
  display: flex;
  align-items: center;
  justify-content: center;
  background: #dde8f4;
}

.svc-band {
  height: 17px;
  flex: none;
  background: linear-gradient(#f4f4f4 40%, #dfe7f0 60%, #c6d4e6);
}

.svc-body {
  flex: 1;
  min-height: 0;
  display: flex;
  gap: 7px;
  padding: 0 9px 0 8px;
  box-shadow: inset 7px 0 0 #aeb0b3, inset -5px 0 0 #b6b8ba;
}

.tree-pane {
  width: 194px;
  background: #fff;
  border-right: 3px solid #b7b7b7;
  border-bottom: 3px solid #a6a6a6;
  padding: 0 2px;
}

.tree-node {
  display: flex;
  align-items: center;
  gap: 8px;
  height: 30px;
  padding-left: 6px;
  background: #e6e6e6;
  white-space: nowrap;
}

.detail-pane {
  flex: 1;
  display: flex;
  flex-direction: column;
  border-left: 3px solid #a0a0a0;
}

.detail-main {
  flex: 1;
  min-height: 0;
  display: flex;
  background: linear-gradient(#a4b8d4 41px, #fff 41px);
}

.detail-side {
  width: 326px;
  flex: none;
}

.detail-head {
  height: 41px;
  display: flex;
  align-items: center;
  gap: 18px;
  padding-left: 14px;
  color: #233a5a;
}

.head-ico {
  width: 24px;
  height: 24px;
}

.detail-name {
  margin: 9px 0 0 7px;
  font-weight: bold;
  color: #111;
}

.detail-link {
  margin: 29px 0 0 7px;
}

.detail-link u {
  color: #7a2a88;
}

.list-side {
  flex: 1;
  display: flex;
  margin-top: 25px;
  background: #fff;
  border-top-left-radius: 14px;
}

.list-wrap {
  flex: 1;
  display: flex;
  flex-direction: column;
}

.svc-row {
  height: 30.6px;
  display: grid;
  grid-template-columns: 28px 263px 137px 102px 146px 24px;
  align-items: center;
  padding-left: 20px;
  white-space: nowrap;
  overflow: hidden;
  color: #222;
}

.svc-row svg {
  width: 26px;
  height: 26px;
}

.svc-row span {
  padding-left: 3px;
}

.list-head {
  position: relative;
  height: 56px;
  padding-top: 14px;
  overflow: visible;
}

.list-head span {
  padding-left: 3px;
}

.list-head span:nth-child(2) {
  margin-left: -25px;
}

.sort-caret {
  position: absolute;
  left: 156px;
  top: 6px;
  font-style: normal;
  font-size: 18px;
  color: #666;
}

.rows {
  height: 624px;
  flex: none;
  overflow: hidden;
}

.svc-row.selected span:nth-child(n+2) {
  height: 100%;
  display: flex;
  align-items: center;
  background: #3373cc;
  color: #dfeaff;
}

.hscroll {
  flex: 1;
  margin-left: 14px;
  padding: 14px 0 0 29px;
  background: #f0f0f0;
}

.hthumb {
  display: block;
  width: 570px;
  height: 3px;
  background: #808080;
}

.vscroll {
  width: 26px;
  flex: none;
  padding: 89px 0 0 12px;
  background: #f3f3f3;
}

.vthumb {
  display: block;
  width: 2px;
  height: 43px;
  background: #8a8a8a;
}

.svc-tabs {
  position: relative;
  height: 32px;
  flex: none;
  display: flex;
  align-items: center;
  padding-left: 20px;
  margin-left: -3px;
  background: #f0f0f0;
  border-top: 2px solid #8a8a8a;
}

.tab-shape {
  position: absolute;
  left: 0;
  top: -2px;
}

.tab {
  position: relative;
  margin-right: 24px;
  font-size: 18px;
  color: #222;
}

.svc-status {
  flex: none;
  height: 38px;
  display: flex;
  justify-content: flex-end;
  padding: 3px 5px 3px 0;
  background: #f0f0f0;
}

.status-part {
  width: 211px;
  border-left: 1px solid #e2e2e2;
}

.status-part + .status-part {
  width: 144px;
}

/* taskbar */
.taskbar {
  position: relative;
  height: 77px;
  flex: none;
  display: flex;
  align-items: center;
  background: #2a2a2a;
  border-top: 2px solid #3e3e3e;
}

.task-apps {
  display: flex;
  margin-left: 466px;
}

.task-app {
  position: relative;
  width: 71px;
  height: 73px;
  display: flex;
  align-items: center;
  justify-content: center;
}

.task-app svg {
  width: 40px;
  height: 46px;
  margin-bottom: 4px;
}

.task-app.running::after {
  content: "";
  position: absolute;
  left: 33px;
  bottom: 8px;
  width: 6px;
  height: 6px;
  border-radius: 50%;
  background: #9a9a9a;
}

.task-app.current {
  background: #383a3c;
}

.task-app.current::after {
  content: "";
  position: absolute;
  left: 20px;
  bottom: 3px;
  width: 28px;
  height: 5px;
  background: #6cc0f0;
}

.task-tray {
  margin-left: 107px;
  display: flex;
  align-items: center;
  gap: 24px;
}

.tray-sound {
  margin-left: -16px;
}

.tray-clock {
  width: 96px;
  margin: 0 -15px 0 -1px;
  text-align: right;
  font-size: 18px;
  line-height: 26px;
  color: #eee;
  white-space: nowrap;
}
```
